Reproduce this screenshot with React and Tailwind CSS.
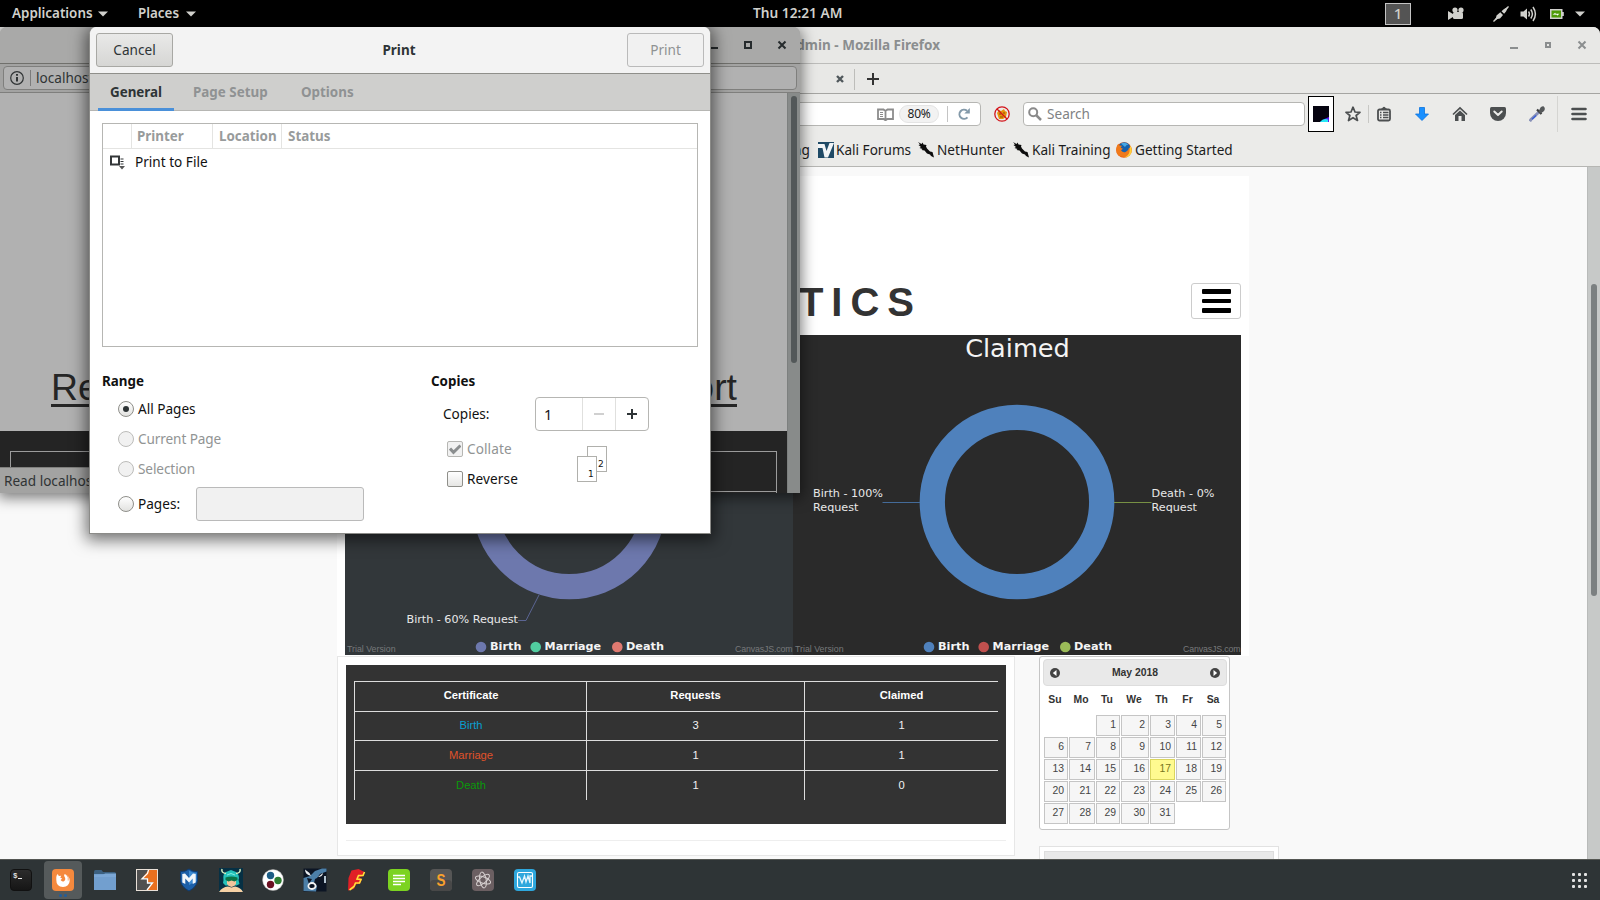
import React from "react";

const UI = "font-['Noto_Sans',sans-serif] text-[13.6px]";
const ARIAL = "font-['Liberation_Sans',Arial,sans-serif]";

function Caret({ className = "" }) {
  return (
    <svg className={className} width="10" height="6" viewBox="0 0 10 6" fill="currentColor">
      <path d="M0 .5h10L5 5.5z" />
    </svg>
  );
}

function TopBar() {
  return (
    <header className="relative z-40 flex h-[27px] items-center bg-black text-[#d0d0cc]">
      <div className="flex flex-1 items-center pl-3 text-[13.4px] font-semibold">
        <span className="-mt-0.5 w-[80px] whitespace-nowrap">Applications</span>
        <Caret className="ml-[6px]" />
        <span className="-mt-0.5 ml-[30px] w-[43px]">Places</span>
        <Caret className="ml-[5px]" />
      </div>
      <span className="-mt-0.5 w-[91px] whitespace-nowrap text-[13.7px] font-semibold">Thu 12:21 AM</span>
      <div className="flex h-full flex-1 items-center justify-end pr-[15px]">
        <div className="flex h-[22px] w-[26px] items-center justify-center border border-[#c4c4c4] bg-[#545454] pb-px text-[15px] font-medium">
          1
        </div>
        <svg className="ml-[37px]" width="16" height="13" viewBox="0 0 16 13" fill="currentColor">
          <circle cx="7" cy="3" r="2.6" /><circle cx="13" cy="3" r="2.6" />
          <rect x="5" y="5" width="10" height="7" rx="1.5" />
          <path d="M0 4l5 3v3l-5 3z" />
        </svg>
        <svg className="ml-[29px]" width="16" height="16" viewBox="0 0 16 16" fill="currentColor">
          <path d="M15.5.5L11 3 8.500 5.200l2.600 2.600L13 5.500zM7.300 6.200L3.500 9.500l-.5 2.300L.5 15.500l4-2.500 2.500-.6 3-3.500z" />
          <path d="M.5 15.500l4-4M12 4l3.500-3.500" stroke="currentColor" strokeWidth="1.400" />
        </svg>
        <svg className="ml-[11px]" width="17" height="16" viewBox="0 0 17 16" fill="none" stroke="currentColor" strokeWidth="1.500">
          <path d="M.5 5.500h3l3.500-3v11l-3.500-3h-3z" fill="currentColor" stroke="none" />
          <path d="M8.500 5.500q1.800 2.500 0 5M10.800 3.500q3.200 4.500 0 9M13 1q4.800 7 0 14" />
        </svg>
        <svg className="ml-[13px]" width="14" height="10" viewBox="0 0 14 10">
          <rect x=".75" y=".75" width="11" height="8.500" fill="#4e9a06" stroke="#d0d0cc" strokeWidth="1.500" />
          <rect x="12" y="3" width="1.800" height="4" fill="#d0d0cc" />
          <path d="M2.500 5.500l3-1.800v1h4L7 6.800v-1z" fill="#fff" />
        </svg>
        <Caret className="ml-[11px]" />
      </div>
    </header>
  );
}

function WindowButtons({ big, className }) {
  const s = big ? 8 : 6;
  return (
    <div className={className}>
      <svg width="84" height="12" viewBox="0 0 84 12" fill="none" stroke="currentColor" strokeWidth="2">
        <path d="M4 9h8" />
        <rect x={big ? 39 : 40} y={big ? 3 : 4} width={s - 2} height={s - 2} />
        <path d="M72.500 2.500l7 7M79.500 2.500l-7 7" />
      </svg>
    </div>
  );
}

function KaliDragon() {
  return (
    <svg width="16" height="16" viewBox="0 0 16 16">
      <path d="M0 0l3.500 2L4.500.5l1 2 3 .5-.5 1.500 1 2 3 3 2.500.5L16 15.500 13 14l-1-1.500-3-1-2.500-3L3.500 8l1-1L1.500 6l1.500-1L.5 3l1.500-.5z" fill="#0d0d0d" />
    </svg>
  );
}

function Firefox() {
  return (
    <svg width="16" height="16" viewBox="0 0 16 16">
      <circle cx="8" cy="8" r="7.800" fill="#e8540c" />
      <circle cx="8.300" cy="6.300" r="6" fill="#1661ae" />
      <path d="M5 1.500q4-2 7.500 1Q10 2.500 9 5z" fill="#47a7e4" />
      <path d="M.3 6.500Q.8 3 2.300 1.800l1.200 1.800 2.500.2-1.300 2 2.300 1-2 1.500q2 3 5 1.500 2.500-1 3-4l2.700.7q.3 6.500-6 8.500Q-.5 16 .3 6.500z" fill="#f07a1a" />
      <path d="M14 3.500q2.500 3 1.500 7-2 5-7.500 5 5-2 5.500-6z" fill="#ffcf3a" />
    </svg>
  );
}

function NavBar() {
  return (
    <div className="flex h-10 items-center text-[#4c4f50]">
      <div className="flex h-6 w-[981px] items-center justify-end rounded-r-sm border border-[#b6b6b3] bg-white pr-[10px]">
        <svg width="17" height="13" viewBox="0 0 17 13" fill="none" stroke="#8c8c8c" strokeWidth="1.800">
          <path d="M1 1.500h5.500l2 1.500 2-1.500H16v9.500h-5.500l-2 1.300-2-1.300H1zM8.500 3v8" />
          <path d="M3 4.500h3M3 6.500h3M3 8.500h3" strokeWidth="1" />
        </svg>
        <span className="ml-[5px] flex h-[18px] w-[40px] items-center justify-center rounded-full border border-[#e4e4e4] bg-[#f2f2f2] text-[12px] tracking-[-0.3px] text-[#222]">80%</span>
        <span className="ml-2 h-4 w-px bg-[#c4c4c4]" />
        <svg className="ml-[10px]" width="12" height="12" viewBox="0 0 12 12" fill="none" stroke="#8399a9" strokeWidth="2">
          <path d="M9.500 9.300A4.600 4.600 0 1 1 9 2.700" />
          <path d="M11.800 0v5.500H6.300z" fill="#8399a9" stroke="none" />
        </svg>
      </div>
      <svg className="ml-[13px]" width="16" height="16" viewBox="0 0 16 16">
        <path d="M3 7l2-3 2 1 3-2 1 2 2 1-1 5-3 2H5z" fill="#e8920c" />
        <path d="M5 8h2M9 7h2M6 11h3" stroke="#8a5200" />
        <circle cx="8" cy="8" r="7.200" fill="none" stroke="#d3141b" strokeWidth="1.300" />
        <path d="M3 3l10 10" stroke="#d3141b" strokeWidth="1.300" />
      </svg>
      <div className="ml-[13px] flex h-6 w-[282px] items-center rounded-sm border border-[#b6b6b3] bg-white pl-1 text-[#7f8284]">
        <svg width="14" height="14" viewBox="0 0 14 14" fill="none" stroke="#8a8a8a" strokeWidth="2">
          <circle cx="5.200" cy="5.200" r="4" /><path d="M8 8l5 5" strokeWidth="2.500" />
        </svg>
        <span className="ml-[5px]">Search</span>
      </div>
      <div className="ml-[3px] flex h-9 w-[26px] items-center justify-center border border-black bg-white">
        <svg className="-ml-px" width="16" height="16" viewBox="0 0 16 16">
          <rect width="16" height="16" fill="#05030f" />
          <path d="M7 16q3-3 9-5v5z" fill="#5a1af0" /><path d="M7 16q3-4 8-2.500V16z" fill="#27e8f5" />
        </svg>
      </div>
      <svg className="ml-[11px]" width="16" height="16" viewBox="0 0 16 16" fill="none" stroke="currentColor" strokeWidth="1.700" strokeLinejoin="round">
        <path d="M8 1.200l2 4.800 5 .3-3.900 3.200 1.400 5L8 11.700l-4.500 2.800 1.400-5L1 6.300 6 6z" />
      </svg>
      <span className="ml-[7px] h-[18px] w-px bg-[#c8c8c5]" />
      <svg className="ml-2" width="14" height="16" viewBox="0 0 14 16" fill="none" stroke="currentColor" strokeWidth="1.800">
        <rect x="1" y="3.500" width="12" height="11" rx="1.500" />
        <path d="M4 3.500L7 1l3 2.500z" fill="currentColor" strokeWidth="1" /><path d="M3 6.500h1.500M6 6.500h5.500M3 9h1.500M6 9h5.500M3 11.500h1.500M6 11.500h5.500" strokeWidth="1.400" />
      </svg>
      <svg className="ml-6" width="14" height="14" viewBox="0 0 14 14">
        <path d="M4.500.5h5V7h4L7 13.500.5 7h4z" fill="#1a90ff" stroke="#0a72dd" strokeWidth=".8" />
      </svg>
      <svg className="ml-[23px]" width="16" height="16" viewBox="0 0 16 16">
        <path d="M1 8.500L8 2l7 6.500" fill="none" stroke="currentColor" strokeWidth="1.700" />
        <path d="M3 9l5-4.500L13 9v6H9.500v-5h-3v5H3z" fill="currentColor" />
      </svg>
      <svg className="ml-[22px]" width="16" height="14" viewBox="0 0 16 14">
        <path d="M1.500 0h13Q16 0 16 1.500V6a8 8 0 0 1-16 0V1.500Q0 0 1.500 0z" fill="currentColor" />
        <path d="M4.300 4.500L8 8l3.700-3.500" fill="none" stroke="#ebebe9" strokeWidth="2" strokeLinecap="round" strokeLinejoin="round" />
      </svg>
      <svg className="ml-[23px]" width="16" height="16" viewBox="0 0 16 16">
        <path d="M10 6L2 13.500.8 15.200" stroke="#8790b8" strokeWidth="3" fill="none" />
        <path d="M7 9.500l-4 3.800" stroke="#3a5fd6" strokeWidth="1.500" />
        <path d="M8 3.500L12.500 8" stroke="#3b3d3e" strokeWidth="2.200" />
        <path d="M9.500 5.500l2-4q3-2.500 4 0t-1 4l-3 2z" fill="#55585a" />
      </svg>
      <span className="ml-3 h-9 w-px bg-[#d5d5d2]" />
      <svg className="ml-[13px]" width="16" height="14" viewBox="0 0 16 14" stroke="currentColor" strokeWidth="2.600" strokeLinecap="round">
        <path d="M1.500 2h13M1.500 7h13M1.500 12h13" />
      </svg>
    </div>
  );
}

function Bookmarks() {
  return (
    <div className="flex h-[33px] items-center whitespace-nowrap border-b border-[#b6b6b3] pl-[790px] text-[#1c1c1c]">
      <span className="w-[28px] pl-[3px]">ng</span>
      <svg width="16" height="16" viewBox="0 0 16 16">
        <rect width="16" height="16" fill="#1f4a66" />
        <path d="M0 2h6.500L8.500 9l3-8H16L10 15.500H6.500L4.500 6H0z" fill="#f2f5f7" />
      </svg>
      <span className="ml-[2px] w-[82px]">Kali Forums</span>
      <KaliDragon />
      <span className="ml-[3px] w-[76px]">NetHunter</span>
      <KaliDragon />
      <span className="ml-[3px] w-[84px]">Kali Training</span>
      <Firefox />
      <span className="ml-[3px]">Getting Started</span>
    </div>
  );
}

const DEJAVU = "DejaVu Sans, Verdana, sans-serif";

function Legend({ x, colors }) {
  return (
    <g fontFamily={DEJAVU} fontSize="11.2" fontWeight="700" fill="#f4f4f4">
      <circle cx={x} cy="312" r="5.300" fill={colors[0]} />
      <text x={x + 9} y="315" textLength="31.500" lengthAdjust="spacingAndGlyphs">Birth</text>
      <circle cx={x + 54.700} cy="312" r="5.300" fill={colors[1]} />
      <text x={x + 63.600} y="315" textLength="56.500" lengthAdjust="spacingAndGlyphs">Marriage</text>
      <circle cx={x + 136.300} cy="312" r="5.300" fill={colors[2]} />
      <text x={x + 145} y="315" textLength="38" lengthAdjust="spacingAndGlyphs">Death</text>
    </g>
  );
}

function Watermark() {
  return (
    <g fontFamily="Liberation Sans, Arial, sans-serif" fontSize="8.800" fill="#77797a">
      <text x="2" y="317">Trial Version</text>
      <text x="447.500" y="317" textAnchor="end" textLength="57.500">CanvasJS.com</text>
    </g>
  );
}

function Charts() {
  return (
    <div className="flex px-2">
      <svg width="448" height="320" viewBox="0 0 448 320" className="bg-[#32373a]">
        <circle cx="224.300" cy="167" r="84.700" fill="none" stroke="#6d78ad" strokeWidth="25.300" />
        <path d="M194 260l-13 25.500h-8" fill="none" stroke="#5b6593" />
        <text x="61.500" y="288" fontFamily={DEJAVU} fontSize="11.200" fill="#e8e8e8" textLength="111.500">Birth - 60% Request</text>
        <Legend x={136} colors={["#6d78ad", "#51cda0", "#df7970"]} />
        <Watermark />
      </svg>
      <svg width="448" height="320" viewBox="0 0 448 320" className="bg-[#2a2a2a]">
        <text x="224.500" y="22.300" textAnchor="middle" fontFamily={DEJAVU} fontSize="25.600" fill="#f4f4f4">Claimed</text>
        <circle cx="224" cy="167" r="84.700" fill="none" stroke="#4f81bc" strokeWidth="25.300" />
        <path d="M89.500 167.500H127" stroke="#446b99" />
        <path d="M321 167.500h37.500" stroke="#779044" />
        <g fontFamily={DEJAVU} fontSize="11.200" fill="#e8e8e8">
          <text x="20" y="162" textLength="70">Birth - 100%</text>
          <text x="20" y="176">Request</text>
          <text x="358.500" y="162" textLength="63">Death - 0%</text>
          <text x="358.500" y="176">Request</text>
        </g>
        <Legend x={136} colors={["#4f81bc", "#c0504e", "#9bbb58"]} />
        <Watermark />
      </svg>
    </div>
  );
}

function ReportTable() {
  const rows = [
    ["Birth", "3", "1", "text-[#0a9fd0]", "h-[29px]"],
    ["Marriage", "1", "1", "text-[#e0522a]", "h-[30px]"],
    ["Death", "1", "0", "text-[#0a9a0a]", "h-[30px]"],
  ];
  return (
    <div className="h-[200px] w-[678px] border border-[#e7e7e7] bg-white px-2 pt-2">
      <div className="h-[159px] bg-[#333333] px-2 pt-4">
        <table className={`${ARIAL} w-[644px] table-fixed border-separate border-spacing-0 border-l border-[#dddddd] text-center text-[11.2px] leading-[14px] text-[#f2f2f2]`}>
          <colgroup>
            <col className="w-[232px]" /><col className="w-[218px]" /><col />
          </colgroup>
          <thead>
            <tr className="h-[30px]">
              <th className="border-r border-t border-[#dddddd] p-0 pb-1 pl-px text-white">Certificate</th>
              <th className="border-r border-t border-[#dddddd] p-0 pb-1 text-white">Requests</th>
              <th className="border-t border-[#dddddd] p-0 pb-1 text-white">Claimed</th>
            </tr>
          </thead>
          <tbody>
            {rows.map((r) => (
              <tr key={r[0]} className={r[4]}>
                <td className={`border-r border-t border-[#dddddd] p-0 pb-0.5 pl-px ${r[3]}`}>{r[0]}</td>
                <td className="border-r border-t border-[#dddddd] p-0 pb-0.5">{r[1]}</td>
                <td className="border-t border-[#dddddd] p-0 pb-0.5">{r[2]}</td>
              </tr>
            ))}
          </tbody>
        </table>
      </div>
      <div className="mt-4 h-px bg-[#eeeeee]" />
    </div>
  );
}

function Calendar() {
  const cells = [0, 0];
  for (let d = 1; d <= 31; d++) cells.push(d);
  const arrow = (path) => (
    <svg width="10" height="10" viewBox="0 0 10 10">
      <circle cx="5" cy="5" r="5" fill="#444" /><path d={path} fill="#fff" />
    </svg>
  );
  const cols = "grid grid-cols-[24px_26px_24px_28px_25px_25px_24px] gap-x-px";
  return (
    <div className={`${ARIAL} h-[174px] w-[191px] rounded-[3px] border border-[#c5c5c5] bg-white px-[3px] pt-[2px] text-[10.4px]`}>
      <div className="-mr-px flex h-[27px] items-center justify-between rounded-sm border border-[#dddddd] bg-[#e9e9e9] px-[6px] font-bold text-[#333]">
        {arrow("M6.500 2v6L2.800 5z")}
        <span>May 2018</span>
        {arrow("M3.500 2v6l3.700-3z")}
      </div>
      <div className={`${cols} mt-[2px] h-[24px] items-center pr-px text-center font-bold text-[#333]`}>
        {["Su", "Mo", "Tu", "We", "Th", "Fr", "Sa"].map((d) => <span key={d}>{d}</span>)}
      </div>
      <div className={`${cols} mt-[3px] gap-y-px pl-px text-right text-[#454545]`}>
        {cells.map((d, i) =>
          d === 0 ? <span key={i} /> : (
            <span key={i} className={d === 17
              ? "h-[21px] border border-[#dad55e] bg-[#fffa90] pr-[3px] leading-[17px] text-[#777620]"
              : "h-[21px] border border-[#c5c5c5] bg-[#f6f6f6] pr-[3px] leading-[17px]"}>{d}</span>
          )
        )}
      </div>
    </div>
  );
}

function MainWindow() {
  return (
    <section className="absolute left-0 top-[27px] h-[832px] w-[1600px] overflow-hidden rounded-tr-[7px] bg-[#ebebe9]">
      <div className="flex h-[37px] items-center border-b border-[#bcbcba] bg-[#e8e8e6] pr-[10px] text-[#8b8e8f]">
        <span className="w-[940px] text-right text-[13.5px] font-bold">Admin - Mozilla Firefox</span>
        <WindowButtons className="ml-auto" />
      </div>
      <div className="flex h-[30px] items-center border-b border-[#a5a5a2] bg-[#e8e8e6] pl-[836px] pt-px">
        <svg width="8" height="8" viewBox="0 0 8 8" stroke="#50585c" strokeWidth="2.400"><path d="M1 1l6 6M7 1L1 7" /></svg>
        <span className="ml-[10px] h-[21px] w-px bg-[#bdbdba]" />
        <svg className="ml-3" width="12" height="12" viewBox="0 0 12 12" stroke="#333" strokeWidth="2"><path d="M6 0v12M0 6h12" /></svg>
      </div>
      <NavBar />
      <Bookmarks />
      <div className="flex h-[692px] bg-[#f9f9f9]">
        <div className="w-[1587px] pl-[337px] pt-[9px]">
          <div className="h-[480px] w-[912px] bg-white">
            <div className="flex h-[159px] items-start justify-between pr-2 pt-[107px]">
              <h1 className={`${ARIAL} -mt-[3px] w-[585px] text-right text-[40px] font-bold leading-[44px] tracking-[8px] text-[#333]`}>STATISTICS</h1>
              <div className="flex h-9 w-[50px] flex-col items-center justify-center gap-[5px] rounded-[3px] border border-[#cccccc] pl-px">
                <span className="h-[4.500px] w-[29px] rounded-[1px] bg-black" />
                <span className="h-[4.500px] w-[29px] rounded-[1px] bg-black" />
                <span className="h-[4.500px] w-[29px] rounded-[1px] bg-black" />
              </div>
            </div>
            <Charts />
          </div>
          <div className="flex items-start gap-6">
            <ReportTable />
            <div>
              <Calendar />
              <div className="mt-4 h-8 w-[240px] border border-[#e2e2e2] bg-white p-1">
                <div className="h-7 border border-[#dddddd] bg-[#e9e9e9]" />
              </div>
            </div>
          </div>
        </div>
        <div className="flex w-[13px] justify-center border-l border-[#b9bbba] bg-[#c7c9c8] pt-[117px]">
          <div className="h-[312px] w-[6px] rounded-full bg-[#7c8081]" />
        </div>
      </div>
    </section>
  );
}

function PopupWindow() {
  return (
    <section className="absolute left-0 top-[27px] h-[466px] w-[800px] rounded-t-[7px] bg-[#a3a3a2] shadow-[0_3px_14px_2px_rgba(0,0,0,0.500)]">
      <div className="flex h-[37px] items-center justify-end rounded-t-[7px] border-b border-[#70706c] bg-[#a9a9a8] pr-[10px] text-[#262b2d]">
        <WindowButtons big />
      </div>
      <div className="h-[29px] border-b border-[#7f7f7d] px-[3px] pt-[2px]">
        <div className="flex h-6 items-center rounded-sm border border-[#7f7f7d] bg-[#b1b1b1] pl-[6px] text-[#303435]">
          <svg width="14" height="14" viewBox="0 0 14 14" fill="none" stroke="currentColor">
            <circle cx="7" cy="7" r="6.300" strokeWidth="1.200" /><path d="M7 6v4.500M7 3v1.800" strokeWidth="2" />
          </svg>
          <span className="ml-[6px] h-4 w-px bg-[#7c7c7c]" />
          <span className="ml-[5px]">localhost</span>
        </div>
      </div>
      <div className="relative flex h-[400px] bg-[#b1b1b1]">
        <div className="flex w-[787px] flex-col">
          <div className="h-[338px] pl-[51px] pt-[267px]">
            <div className={`${ARIAL} flex h-[47px] w-[686px] justify-between border-b-[3px] border-[#262626] text-[37.400px] leading-[54px] text-[#262626]`}>
              <span>Records</span><span>Report</span>
            </div>
          </div>
          <div className="h-[62px] overflow-hidden bg-[#242424] px-[10px] pt-5">
            <div className="h-[41px] border border-[#9b9b9b]" />
            <div className="h-2 border-x border-[#9b9b9b]" />
          </div>
        </div>
        <div className="flex w-[13px] justify-center border-l border-[#7d807f] bg-[#888b8a] pt-[3px]">
          <div className="h-[267px] w-[6px] rounded-full bg-[#535859]" />
        </div>
        <div className="absolute bottom-0 left-0 flex h-[26px] w-[300px] items-center border-t border-[#7f7f7d] bg-[#a3a3a2] pl-1 text-[#303435]">
          <span>Read localhost</span>
        </div>
      </div>
    </section>
  );
}

function Radio({ label, disabled, checked }) {
  return (
    <div className={disabled ? "flex h-[30px] items-center text-[#919494]" : "flex h-[30px] items-center text-[#111]"}>
      <span className={disabled
        ? "h-4 w-4 rounded-full border border-[#bcbcba] bg-[#f1f1f1]"
        : "flex h-4 w-4 items-center justify-center rounded-full border border-[#8f8f8a] bg-gradient-to-b from-white to-[#e2e2e0]"}>
        {checked && <span className="h-1.5 w-1.5 rounded-full bg-[#2e3436]" />}
      </span>
      <span className={disabled ? "ml-1 tracking-[-0.1px]" : "ml-1"}>{label}</span>
    </div>
  );
}

function PrintDialog() {
  return (
    <section className="absolute left-[89px] top-[27px] z-20 h-[507px] w-[622px] rounded-t-[7px] border border-t-0 border-[#8b8b88] bg-white shadow-[0_3px_16px_3px_rgba(0,0,0,0.550)]">
      <div className="flex h-[47px] items-center justify-between rounded-t-[7px] border-b border-[#8f8f8a] bg-[#f3f3f3] px-[6px] text-[#2e3436]">
        <div className="flex h-[34px] w-[77px] items-center justify-center rounded-[3px] border border-[#a8a8a4] bg-gradient-to-b from-[#e9e9e8] to-[#d6d6d4]">Cancel</div>
        <div className="pb-px pr-0.5 text-[13.500px] font-bold">Print</div>
        <div className="flex h-[34px] w-[77px] items-center justify-center rounded-[3px] border border-[#bababa] bg-[#f1f1f1] text-[#8f9293]">Print</div>
      </div>
      <div className="flex h-[37px] border-b border-[#b6b6b3] bg-[#cfcfcd] pl-2 text-[13.400px] font-bold text-[#8f9293]">
        <div className="flex h-[37px] w-[76px] items-center justify-center border-b-[3px] border-[#4a90d9] pt-0.5 text-[#2e3436]">General</div>
        <div className="ml-[19px] flex h-9 w-[76px] items-center whitespace-nowrap">Page Setup</div>
        <div className="ml-[32px] flex h-9 items-center">Options</div>
      </div>
      <div className="px-3 pt-3">
        <div className="h-[224px] w-[596px] border border-[#b6b6b3]">
          <div className="flex h-[25px] border-b border-[#e4e4e2] text-[13.400px] font-bold leading-[25px] text-[#989b9b]">
            <div className="w-[29px] border-r border-[#e4e4e2]" />
            <div className="w-[81px] border-r border-[#e4e4e2] pl-[5px]">Printer</div>
            <div className="w-[69px] border-r border-[#e4e4e2] pl-[6px]">Location</div>
            <div className="pl-[6px]">Status</div>
          </div>
          <div className="flex h-[26px] items-center pl-[7px] text-[#111]">
            <svg width="15" height="15" viewBox="0 0 15 15" fill="none" stroke="#333638">
              <rect x="1" y="1.500" width="8" height="8" strokeWidth="2" />
              <path d="M10.500 4h3M10.500 6.500h3M10.500 9h3" strokeWidth="1.200" />
              <path d="M9 11h6l-3 3.500z" fill="#555" stroke="none" />
            </svg>
            <span className="ml-[10px]">Print to File</span>
          </div>
        </div>
        <div className="flex pt-[23px] text-[#111]">
          <div className="w-[329px]">
            <div className="h-[24px] text-[13.400px] font-bold leading-[22px]">Range</div>
            <div className="pl-4">
              <Radio label="All Pages" checked />
              <Radio label="Current Page" disabled />
              <Radio label="Selection" disabled />
              <div className="flex items-center pt-[3px]">
                <div className="w-[78px]"><Radio label="Pages:" /></div>
                <div className="h-[34px] w-[168px] rounded-[3px] border border-[#bababa] bg-[#f1f1f1]" />
              </div>
            </div>
          </div>
          <div>
            <div className="h-[27px] text-[13.400px] font-bold leading-[22px]">Copies</div>
            <div className="flex h-[34px] items-center pl-3">
              <span className="w-[92px]">Copies:</span>
              <div className="flex h-[34px] w-[114px] items-center rounded-[4px] border border-[#b6b6b3]">
                <span className="w-[46px] pl-[8px] text-[14.500px]">1</span>
                <span className="flex h-full w-[33px] items-center justify-center border-l border-[#e0e0de]"><span className="h-0.5 w-[10px] bg-[#d0d0d0]" /></span>
                <span className="flex h-full w-[33px] items-center justify-center border-l border-[#e0e0de]">
                  <svg width="10" height="10" viewBox="0 0 10 10" stroke="#2e3436" strokeWidth="2"><path d="M5 0v10M0 5h10" /></svg>
                </span>
              </div>
            </div>
            <div className="flex pl-4">
              <div className="w-[130px] pt-[3px]">
                <div className="flex h-[30px] items-center text-[#919494]">
                  <span className="flex h-4 w-4 items-center justify-center rounded-[2px] border border-[#b6b6b3] bg-[#f1f1f1]">
                    <svg width="12" height="11" viewBox="0 0 12 11" fill="none" stroke="#8b8e8f" strokeWidth="3"><path d="M1 4.500l3.500 3.800L11.500 1.500" /></svg>
                  </span>
                  <span className="ml-1 tracking-[0.1px]">Collate</span>
                </div>
                <div className="flex h-[30px] items-center">
                  <span className="h-4 w-4 rounded-[2px] border border-[#8f8f8a] bg-gradient-to-b from-white to-[#e6e6e4]" />
                  <span className="ml-1 tracking-[0.1px]">Reverse</span>
                </div>
              </div>
              <svg className="mt-[15px]" width="30" height="36" viewBox="0 0 30 36" fill="#fff" stroke="#b0b0ac">
                <rect x="10.500" y=".5" width="19" height="25" />
                <rect x=".5" y="10.500" width="19" height="25" />
                <g fill="#111" stroke="none" fontFamily={DEJAVU} fontSize="9">
                  <text x="21" y="21">2</text><text x="11" y="31">1</text>
                </g>
              </svg>
            </div>
          </div>
        </div>
      </div>
    </section>
  );
}

const dockIcons = [
  <><defs><linearGradient id="tm" x2="0" y2="1"><stop stopColor="#2c2c2c" /><stop offset="1" stopColor="#151515" /></linearGradient></defs>
    <rect x=".5" y=".5" width="21" height="21" rx="3.500" fill="url(#tm)" stroke="#111" />
    <text x="3" y="9" fontSize="7.500" fontWeight="700" fill="#ddd" fontFamily="Liberation Mono, monospace">$</text><path d="M8 9.500h4" stroke="#eee" /></>,
  <><rect width="22" height="22" rx="4" fill="#f5893d" />
    <path d="M4.300 8Q4.500 6 5.800 5l1 2 2.400-.3-.9 2 1.900.8-1.600 1.600q1.600 2.200 3.700.8 2-1.600 0-4.600-.6-1 .4-2.300 5 2 5 6.800-.4 6-6.700 6.200-6.800-.4-6.700-7z" fill="#fff" />
    <path d="M14.500 5.500q2.600 3 1.700 6" stroke="#f5893d" strokeWidth=".7" fill="none" /></>,
  <><path d="M0 3q0-2 1.500-2h6L9 3h11.500Q22 3 22 5v3H0z" fill="#3c6080" /><rect y="5" width="22" height="16" fill="#729fcf" /><path d="M0 6h9l2-1.500h11V8H0z" fill="#7ba7d6" /></>,
  <><rect x=".5" y=".5" width="21" height="21" fill="#505050" /><path d="M12.500 1H21v20H11l6-8h-5V9.500H6z" fill="#e9701f" /><path d="M12.500 1l-1 3.500L6 9.800h5.500V14h5L11 21" stroke="#fff" fill="none" strokeWidth="1.300" /><rect x=".5" y=".5" width="21" height="21" fill="none" stroke="#e8e0d8" /></>,
  <><path d="M11 0q4 3 8.500 2.500V12q-1 6-8.500 10Q3.500 18 2.500 12V2.500Q7 3 11 0z" fill="#1c5fa8" stroke="#0f3b70" /><path d="M11 1.500q3.500 2.500 7.500 2.200V12L11 16z" fill="#3c8ad2" /><path d="M4.300 13.500V5L7 4.500l4 4.500 4-4.500 2.700.5v8.500l-3 1.500V9.500L11 13.500l-3.700-4V15z" fill="#f2f6fa" /></>,
  <><rect x="-1" y="-1" width="24" height="24" fill="#063044" /><path d="M3.500 11Q2.500 5 6 3l5-2 5 2q4 3 2.500 8l1 4-3 1.500H5.500L3 14z" fill="#25c2ba" /><path d="M2 0q-1 4 4 4.500M20 0q1 4-4 4.500" stroke="#d7f0c0" strokeWidth="1.500" fill="none" /><path d="M7 9h9v6q-2 3-4.500 3T7 15z" fill="#f2c49b" /><path d="M5.500 8.500q6-2 12 0V11l-3 1.500-3-1-3 1-3-1.500z" fill="#0b7347" /><path d="M7 6q4-3 8 0" stroke="#7ff0e0" fill="none" /><path d="M-1 23q3-5 9-5.500l3.500 1 3.500-1q6 1 8 5.500z" fill="#f6d1a5" /></>,
  <><circle cx="11" cy="11" r="10.500" fill="#fff" stroke="#aaa" strokeWidth=".5" /><circle cx="8.500" cy="6.500" r="3.700" fill="#1d5d85" /><circle cx="16" cy="11.500" r="3.700" fill="#2e7d32" /><circle cx="8.500" cy="15.500" r="3.700" fill="#6b1022" /></>,
  <><rect x="-.5" y="-.5" width="23" height="23" fill="#0c1524" /><path d="M-.5 22V9L6 7l5-5 7-2.500h4.500v3L16 5l-3 4-2 1-1 4 3 3-1 5.500z" fill="#4c7fa8" /><path d="M1 .5q0 5 6 6.500L5.500 4zM14 8l5-4q-.5 4-5 4z" fill="#e9edf0" /><path d="M3 9l5 1-3 5z" fill="#0c1524" /><ellipse cx="8" cy="17" rx="3.600" ry="3" fill="#0c1524" stroke="#f4f4f4" strokeWidth="1.800" /><path d="M21 7v7" stroke="#b4c4d0" strokeWidth="2" /></>,
  <><path d="M5.500 1.500l7-1.500 6 3-1 4-4 1.500 2.500 2-2 4-4 1-2 4.500-6 1.500L2.500 9z" fill="#e11f26" /><path d="M18.500 3l-1.500 3.500h-4.500L11 10l4 .5-1.500 3.500H9.500L8 17.500 3.500 21" fill="none" stroke="#ffe23a" strokeWidth="1.600" /></>,
  <><rect width="22" height="22" rx="4" fill="#7cd321" /><path d="M5 6.500h12M5 9.500h12M5 12.500h12M5 15.500h8" stroke="#fff" strokeWidth="1.400" /></>,
  <><rect width="22" height="22" rx="4" fill="#565656" /><rect y="11" width="22" height="11" rx="4" fill="#484848" /><text x="11" y="17" textAnchor="middle" fontSize="17" fontWeight="700" fill="#f9a12c" fontFamily="Liberation Sans, sans-serif" textLength="9" lengthAdjust="spacingAndGlyphs">S</text></>,
  <><rect width="22" height="22" rx="4" fill="#6b5f62" /><g fill="none" stroke="#d8d2d2" strokeWidth="1"><ellipse cx="11" cy="11" rx="8" ry="3.200" transform="rotate(20 11 11)" /><ellipse cx="11" cy="11" rx="8" ry="3.200" transform="rotate(80 11 11)" /><ellipse cx="11" cy="11" rx="8" ry="3.200" transform="rotate(140 11 11)" /></g></>,
  <><rect width="22" height="22" rx="4" fill="#2ea7dd" /><rect x="3.500" y="3.500" width="15" height="15" rx="1.500" fill="none" stroke="#fff" strokeWidth="1.100" /><path d="M4 8h1.500L8 14l2.500-7 1.500 6 2-6 2 7V7h2" fill="none" stroke="#e6f6fd" strokeWidth="1.300" /></>,
];

function Dock() {
  return (
    <footer className="absolute left-0 top-[859px] flex h-[41px] w-[1600px] items-center border-t border-[#555753] bg-[#2e3436]">
      {dockIcons.map((icon, i) => (
        <div key={i} className={i === 1
          ? "relative mx-[2px] flex h-[38px] w-[38px] items-center justify-center rounded-[4px] bg-[#555a5b]"
          : "flex h-[38px] w-[42px] items-center justify-center"}>
          <svg width="22" height="22" viewBox="0 0 22 22" className="overflow-visible">{icon}</svg>
          {i === 1 && (
            <div className="absolute bottom-[2px] left-[15px] flex gap-[2px]">
              <span className="h-[3px] w-[3px] rounded-full bg-[#215d9c]" />
              <span className="h-[3px] w-[3px] rounded-full bg-[#215d9c]" />
            </div>
          )}
        </div>
      ))}
      <div className="ml-auto mr-[13px] grid grid-cols-3 gap-[3px]">
        {[0, 1, 2, 3, 4, 5, 6, 7, 8].map((n) => <span key={n} className="h-[3px] w-[3px] rounded-[1px] bg-[#e4e4e4]" />)}
      </div>
    </footer>
  );
}

export default function App() {
  return (
    <div className={`${UI} relative h-[900px] w-[1600px] overflow-hidden bg-black leading-5`}>
      <TopBar />
      <MainWindow />
      <PopupWindow />
      <PrintDialog />
      <Dock />
    </div>
  );
}
